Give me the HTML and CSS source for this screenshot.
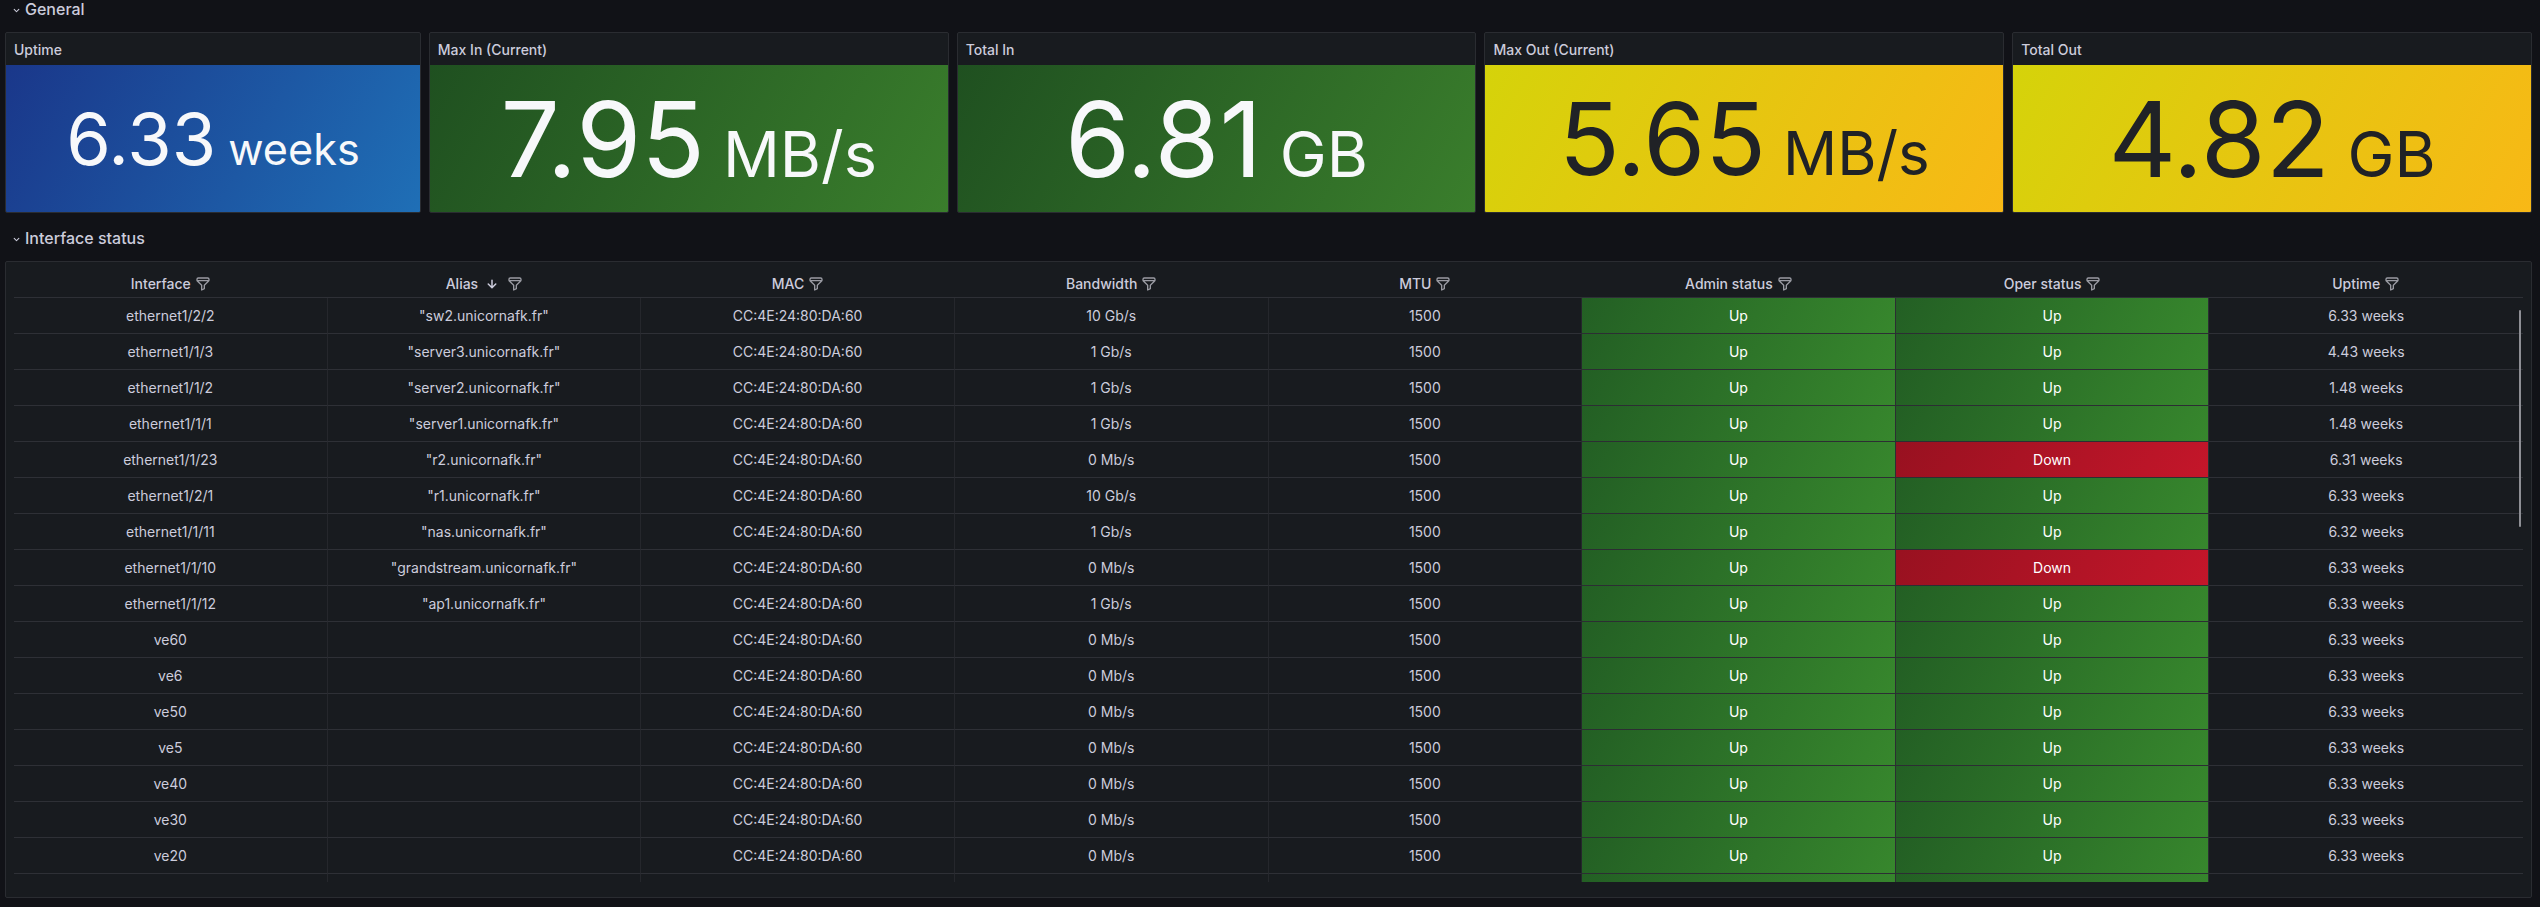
FILE: index.html
```
<!DOCTYPE html>
<html lang="en">
<head>
<meta charset="utf-8">
<title>Switch dashboard</title>
<link rel="stylesheet" href="styles.css">
</head>
<body>
<div class="dash">
  <div class="row-title">
    <svg class="chev" viewBox="0 0 24 24"><path d="M17,9.17a1,1,0,0,0-1.41,0L12,12.71,8.46,9.17a1,1,0,0,0-1.41,0,1,1,0,0,0,0,1.42l4.24,4.24a1,1,0,0,0,1.420,0L17,10.59A1,1,0,0,0,17,9.17Z"/></svg>
    <span>General</span>
  </div>

  <div class="stats">
    <section class="stat">
      <header class="stat-title">Uptime</header>
      <div class="stat-body bg-blue"><span class="value size-s">6.33<span class="unit"> weeks</span></span></div>
    </section>
    <section class="stat">
      <header class="stat-title">Max In (Current)</header>
      <div class="stat-body bg-green"><span class="value size-l">7.95<span class="unit"> MB/s</span></span></div>
    </section>
    <section class="stat">
      <header class="stat-title">Total In</header>
      <div class="stat-body bg-green"><span class="value size-l">6.81<span class="unit"> GB</span></span></div>
    </section>
    <section class="stat">
      <header class="stat-title">Max Out (Current)</header>
      <div class="stat-body bg-yellow"><span class="value size-m">5.65<span class="unit"> MB/s</span></span></div>
    </section>
    <section class="stat">
      <header class="stat-title">Total Out</header>
      <div class="stat-body bg-yellow"><span class="value size-l">4.82<span class="unit"> GB</span></span></div>
    </section>
  </div>

  <div class="row-title second">
    <svg class="chev" viewBox="0 0 24 24"><path d="M17,9.17a1,1,0,0,0-1.41,0L12,12.71,8.46,9.170a1,1,0,0,0-1.41,0,1,1,0,0,0,0,1.42l4.24,4.24a1,1,0,0,0,1.42,0L17,10.59A1,1,0,0,0,17,9.17Z"/></svg>
    <span>Interface status</span>
  </div>

  <section class="table-panel">
    <div class="thead">
      <div class="th">Interface<svg class="filter" viewBox="0 0 24 24"><path d="M19,2H5A3,3,0,0,0,2,5V6.17a3,3,0,0,0,.25,1.2l0,.06a2.81,2.810,0,0,0,.59.86L9,14.41V21a1,1,0,0,0,.47.85A1,1,0,0,0,10,22a1,1,0,0,0,.45-.11l4-2A1,1,0,0,0,15,19V14.41l6.12-6.12a2.81,2.81,0,0,0,.59-.86l0-.06a3,3,0,0,0,.28-1.2V5A3,3,0,0,0,19,2ZM13.29,13.29A1,1,0,0,0,13,14v4.38l-2,1V14a1,1,0,0,0-.29-.71L5.41,8H18.59ZM20,6H4V5A1,1,0,0,1,5,4H19a1,1,0,0,1,1,1Z"/></svg></div>
      <div class="th">Alias<svg class="sort" viewBox="0 0 24 24"><path d="M17.71,11.29a1,1,0,0,0-1.42,0L13,14.59V7a1,1,0,0,0-2,0v7.59l-3.29-3.3a1,1,0,0,0-1.42,1.42l5,5a1,1,0,0,0,.33.21.94.94,0,0,0,.76,0,1,1,0,0,0,.33-.21l5-5A1,1,0,0,0,17.71,11.29Z"/></svg><svg class="filter" viewBox="0 0 24 24"><path d="M19,2H5A3,3,0,0,0,2,5V6.17a3,3,0,0,0,.25,1.2l0,.06a2.81,2.81,0,0,0,.59.86L9,14.41V21a1,1,0,0,0,.47.85A1,1,0,0,0,10,22a1,1,0,0,0,.45-.11l4-2A1,1,0,0,0,15,19V14.41l6.12-6.12a2.81,2.81,0,0,0,.59-.86l0-.06a3,3,0,0,0,.28-1.2V5A3,3,0,0,0,19,2ZM13.29,13.29A1,1,0,0,0,13,14v4.38l-2,1V14a1,1,0,0,0-.29-.71L5.41,8H18.59ZM20,6H4V5A1,1,0,0,1,5,4H19a1,1,0,0,1,1,1Z"/></svg></div>
      <div class="th">MAC<svg class="filter" viewBox="0 0 24 24"><path d="M19,2H5A3,3,0,0,0,2,5V6.17a3,3,0,0,0,.25,1.2l0,.06a2.81,2.81,0,0,0,.59.86L9,14.41V21a1,1,0,0,0,.47.85A1,1,0,0,0,10,22a1,1,0,0,0,.45-.11l4-2A1,1,0,0,0,15,19V14.41l6.12-6.12a2.81,2.81,0,0,0,.59-.86l0-.06a3,3,0,0,0,.28-1.2V5A3,3,0,0,0,19,2ZM13.29,13.29A1,1,0,0,0,13,14v4.38l-2,1V14a1,1,0,0,0-.29-.71L5.41,8H18.59ZM20,6H4V5A1,1,0,0,1,5,4H19a1,1,0,0,1,1,1Z"/></svg></div>
      <div class="th">Bandwidth<svg class="filter" viewBox="0 0 24 24"><path d="M19,2H5A3,3,0,0,0,2,5V6.17a3,3,0,0,0,.25,1.2l0,.06a2.81,2.81,0,0,0,.59.86L9,14.41V21a1,1,0,0,0,.47.85A1,1,0,0,0,10,22a1,1,0,0,0,.45-.11l4-2A1,1,0,0,0,15,19V14.41l6.12-6.12a2.81,2.81,0,0,0,.59-.86l0-.06a3,3,0,0,0,.28-1.2V5A3,3,0,0,0,19,2ZM13.29,13.29A1,1,0,0,0,13,14v4.38l-2,1V14a1,1,0,0,0-.29-.71L5.41,8H18.59ZM20,6H4V5A1,1,0,0,1,5,4H19a1,1,0,0,1,1,1Z"/></svg></div>
      <div class="th">MTU<svg class="filter" viewBox="0 0 24 24"><path d="M19,2H5A3,3,0,0,0,2,5V6.17a3,3,0,0,0,.25,1.2l0,.06a2.81,2.81,0,0,0,.59.86L9,14.41V21a1,1,0,0,0,.47.85A1,1,0,0,0,10,22a1,1,0,0,0,.45-.11l4-2A1,1,0,0,0,15,19V14.41l6.12-6.12a2.81,2.81,0,0,0,.59-.86l0-.06a3,3,0,0,0,.28-1.2V5A3,3,0,0,0,19,2ZM13.29,13.29A1,1,0,0,0,13,14v4.38l-2,1V14a1,1,0,0,0-.29-.71L5.41,8H18.59ZM20,6H4V5A1,1,0,0,1,5,4H19a1,1,0,0,1,1,1Z"/></svg></div>
      <div class="th">Admin status<svg class="filter" viewBox="0 0 24 24"><path d="M19,2H5A3,3,0,0,0,2,5V6.17a3,3,0,0,0,.25,1.2l0,.06a2.81,2.81,0,0,0,.59.86L9,14.41V21a1,1,0,0,0,.47.85A1,1,0,0,0,10,22a1,1,0,0,0,.45-.11l4-2A1,1,0,0,0,15,19V14.41l6.12-6.12a2.81,2.81,0,0,0,.59-.86l0-.06a3,3,0,0,0,.28-1.2V5A3,3,0,0,0,19,2ZM13.29,13.29A1,1,0,0,0,13,14v4.38l-2,1V14a1,1,0,0,0-.29-.71L5.41,8H18.59ZM20,6H4V5A1,1,0,0,1,5,4H19a1,1,0,0,1,1,1Z"/></svg></div>
      <div class="th">Oper status<svg class="filter" viewBox="0 0 24 24"><path d="M19,2H5A3,3,0,0,0,2,5V6.17a3,3,0,0,0,.25,1.2l0,.06a2.81,2.81,0,0,0,.59.86L9,14.41V21a1,1,0,0,0,.47.85A1,1,0,0,0,10,22a1,1,0,0,0,.45-.11l4-2A1,1,0,0,0,15,19V14.41l6.12-6.12a2.81,2.81,0,0,0,.59-.86l0-.06a3,3,0,0,0,.28-1.2V5A3,3,0,0,0,19,2ZM13.29,13.29A1,1,0,0,0,13,14v4.38l-2,1V14a1,1,0,0,0-.29-.71L5.41,8H18.59ZM20,6H4V5A1,1,0,0,1,5,4H19a1,1,0,0,1,1,1Z"/></svg></div>
      <div class="th">Uptime<svg class="filter" viewBox="0 0 24 24"><path d="M19,2H5A3,3,0,0,0,2,5V6.17a3,3,0,0,0,.25,1.2l0,.06a2.81,2.81,0,0,0,.59.86L9,14.41V21a1,1,0,0,0,.47.85A1,1,0,0,0,10,22a1,1,0,0,0,.45-.11l4-2A1,1,0,0,0,15,19V14.41l6.12-6.12a2.81,2.81,0,0,0,.59-.86l0-.06a3,3,0,0,0,.28-1.2V5A3,3,0,0,0,19,2ZM13.29,13.29A1,1,0,0,0,13,14v4.38l-2,1V14a1,1,0,0,0-.29-.71L5.41,8H18.59ZM20,6H4V5A1,1,0,0,1,5,4H19a1,1,0,0,1,1,1Z"/></svg></div>
    </div>

    <div class="tbody">
      <div class="tr"><div class="td">ethernet1/2/2</div><div class="td">"sw2.unicornafk.fr"</div><div class="td">CC:4E:24:80:DA:60</div><div class="td">10 Gb/s</div><div class="td">1500</div><div class="td up">Up</div><div class="td up">Up</div><div class="td">6.33 weeks</div></div>
      <div class="tr"><div class="td">ethernet1/1/3</div><div class="td">"server3.unicornafk.fr"</div><div class="td">CC:4E:24:80:DA:60</div><div class="td">1 Gb/s</div><div class="td">1500</div><div class="td up">Up</div><div class="td up">Up</div><div class="td">4.43 weeks</div></div>
      <div class="tr"><div class="td">ethernet1/1/2</div><div class="td">"server2.unicornafk.fr"</div><div class="td">CC:4E:24:80:DA:60</div><div class="td">1 Gb/s</div><div class="td">1500</div><div class="td up">Up</div><div class="td up">Up</div><div class="td">1.48 weeks</div></div>
      <div class="tr"><div class="td">ethernet1/1/1</div><div class="td">"server1.unicornafk.fr"</div><div class="td">CC:4E:24:80:DA:60</div><div class="td">1 Gb/s</div><div class="td">1500</div><div class="td up">Up</div><div class="td up">Up</div><div class="td">1.48 weeks</div></div>
      <div class="tr"><div class="td">ethernet1/1/23</div><div class="td">"r2.unicornafk.fr"</div><div class="td">CC:4E:24:80:DA:60</div><div class="td">0 Mb/s</div><div class="td">1500</div><div class="td up">Up</div><div class="td down">Down</div><div class="td">6.31 weeks</div></div>
      <div class="tr"><div class="td">ethernet1/2/1</div><div class="td">"r1.unicornafk.fr"</div><div class="td">CC:4E:24:80:DA:60</div><div class="td">10 Gb/s</div><div class="td">1500</div><div class="td up">Up</div><div class="td up">Up</div><div class="td">6.33 weeks</div></div>
      <div class="tr"><div class="td">ethernet1/1/11</div><div class="td">"nas.unicornafk.fr"</div><div class="td">CC:4E:24:80:DA:60</div><div class="td">1 Gb/s</div><div class="td">1500</div><div class="td up">Up</div><div class="td up">Up</div><div class="td">6.32 weeks</div></div>
      <div class="tr"><div class="td">ethernet1/1/10</div><div class="td">"grandstream.unicornafk.fr"</div><div class="td">CC:4E:24:80:DA:60</div><div class="td">0 Mb/s</div><div class="td">1500</div><div class="td up">Up</div><div class="td down">Down</div><div class="td">6.33 weeks</div></div>
      <div class="tr"><div class="td">ethernet1/1/12</div><div class="td">"ap1.unicornafk.fr"</div><div class="td">CC:4E:24:80:DA:60</div><div class="td">1 Gb/s</div><div class="td">1500</div><div class="td up">Up</div><div class="td up">Up</div><div class="td">6.33 weeks</div></div>
      <div class="tr"><div class="td">ve60</div><div class="td"></div><div class="td">CC:4E:24:80:DA:60</div><div class="td">0 Mb/s</div><div class="td">1500</div><div class="td up">Up</div><div class="td up">Up</div><div class="td">6.33 weeks</div></div>
      <div class="tr"><div class="td">ve6</div><div class="td"></div><div class="td">CC:4E:24:80:DA:60</div><div class="td">0 Mb/s</div><div class="td">1500</div><div class="td up">Up</div><div class="td up">Up</div><div class="td">6.33 weeks</div></div>
      <div class="tr"><div class="td">ve50</div><div class="td"></div><div class="td">CC:4E:24:80:DA:60</div><div class="td">0 Mb/s</div><div class="td">1500</div><div class="td up">Up</div><div class="td up">Up</div><div class="td">6.33 weeks</div></div>
      <div class="tr"><div class="td">ve5</div><div class="td"></div><div class="td">CC:4E:24:80:DA:60</div><div class="td">0 Mb/s</div><div class="td">1500</div><div class="td up">Up</div><div class="td up">Up</div><div class="td">6.33 weeks</div></div>
      <div class="tr"><div class="td">ve40</div><div class="td"></div><div class="td">CC:4E:24:80:DA:60</div><div class="td">0 Mb/s</div><div class="td">1500</div><div class="td up">Up</div><div class="td up">Up</div><div class="td">6.33 weeks</div></div>
      <div class="tr"><div class="td">ve30</div><div class="td"></div><div class="td">CC:4E:24:80:DA:60</div><div class="td">0 Mb/s</div><div class="td">1500</div><div class="td up">Up</div><div class="td up">Up</div><div class="td">6.33 weeks</div></div>
      <div class="tr"><div class="td">ve20</div><div class="td"></div><div class="td">CC:4E:24:80:DA:60</div><div class="td">0 Mb/s</div><div class="td">1500</div><div class="td up">Up</div><div class="td up">Up</div><div class="td">6.33 weeks</div></div>
      <div class="tr"><div class="td"></div><div class="td"></div><div class="td"></div><div class="td"></div><div class="td"></div><div class="td up"></div><div class="td up"></div><div class="td"></div></div>
      <div class="scrollbar"></div>
    </div>
  </section>
</div>
</body>
</html>
```
FILE: styles.css
```
* { box-sizing: border-box; }

html, body {
  margin: 0;
  padding: 0;
  background: #111217;
  color: #ccccdc;
  font-family: Inter, "Noto Sans", "Liberation Sans", sans-serif;
  overflow: hidden;
}

.dash {
  width: 2540px;
  height: 907px;
  padding: 0 8px 0 5px;
  display: flex;
  flex-direction: column;
}

.row-title {
  height: 24px;
  display: flex;
  align-items: flex-start;
  font-size: 16px;
  font-weight: 500;
  line-height: 18px;
  color: #ccccdc;
  margin-bottom: 8px;
  padding-left: 5px;
}
.row-title.second { margin-top: 16px; }
.row-title .chev {
  width: 13px;
  height: 13px;
  fill: #ccccdc;
  margin-top: 4px;
  margin-right: 2px;
  flex: none;
}

/* ---------- stat panels ---------- */
.stats {
  display: grid;
  grid-template-columns: 4fr 5fr 5fr 5fr 5fr;
  gap: 8px;
  height: 181px;
}
.stat {
  background: #181b1f;
  border: 1px solid #2a2c31;
  border-radius: 2px;
  display: flex;
  flex-direction: column;
  overflow: hidden;
}
.stat-title {
  height: 32px;
  line-height: 33px;
  padding: 0 8px;
  font-size: 14px;
  font-weight: 500;
  color: #ccccdc;
  flex: none;
}
.stat-body {
  flex: 1;
  display: flex;
  align-items: center;
  justify-content: center;
}
.bg-blue   { background: linear-gradient(120deg, #1a378a, #1f6fb6); }
.bg-green  { background: linear-gradient(120deg, #1f5020, #3a7e2c); }
.bg-yellow { background: linear-gradient(120deg, #d5d30a, #f8b816); color: #202226; }

.value {
  line-height: 1;
  font-weight: 400;
  color: #f7f8fa;
  white-space: nowrap;
}
.bg-yellow .value { color: #202226; }
.value .unit { font-size: 0.6em; }
.size-s { font-size: 72px; }
.size-m { font-size: 100px; }
.size-l { font-size: 105px; }

/* ---------- table panel ---------- */
.table-panel {
  margin-top: 0;
  height: 637px;
  background: #181b1f;
  border: 1px solid #2a2c31;
  border-radius: 2px;
  padding: 8px;
  display: flex;
  flex-direction: column;
}
.thead {
  height: 28px;
  display: grid;
  grid-template-columns: repeat(8, 1fr);
  border-bottom: 1px solid #2e3036;
  flex: none;
}
.th {
  display: flex;
  align-items: center;
  justify-content: center;
  font-size: 14px;
  font-weight: 500;
  color: #ccccdc;
  white-space: nowrap;
}
.th .filter {
  width: 16px;
  height: 16px;
  fill: #9a9ba3;
  margin-left: 4px;
}
.th .sort {
  width: 18px;
  height: 18px;
  fill: #ccccdc;
  margin-left: 5px;
  margin-right: 2px;
}

.tbody {
  position: relative;
  height: 584px;
  overflow: hidden;
  flex: none;
}
.tr {
  height: 36px;
  display: grid;
  grid-template-columns: repeat(8, 1fr);
}
.td {
  display: flex;
  align-items: center;
  justify-content: center;
  font-size: 14px;
  color: #ccccdc;
  white-space: nowrap;
  border-bottom: 1px solid #2e3036;
  border-right: 1px solid #25272c;
}
.td:last-child { border-right: none; }
.td.up {
  background: linear-gradient(120deg, #235f24, #37872d);
  color: #ffffff;
  border-right-color: #2c2e33;
  border-bottom-color: #2c2e33;
}
.td.down {
  background: linear-gradient(120deg, #981120, #c4162a);
  color: #ffffff;
  border-right-color: #2c2e33;
  border-bottom-color: #2c2e33;
}

.scrollbar {
  position: absolute;
  right: 2px;
  top: 12px;
  width: 2px;
  height: 217px;
  background: #8e8f95;
  border-radius: 1px;
}
```
